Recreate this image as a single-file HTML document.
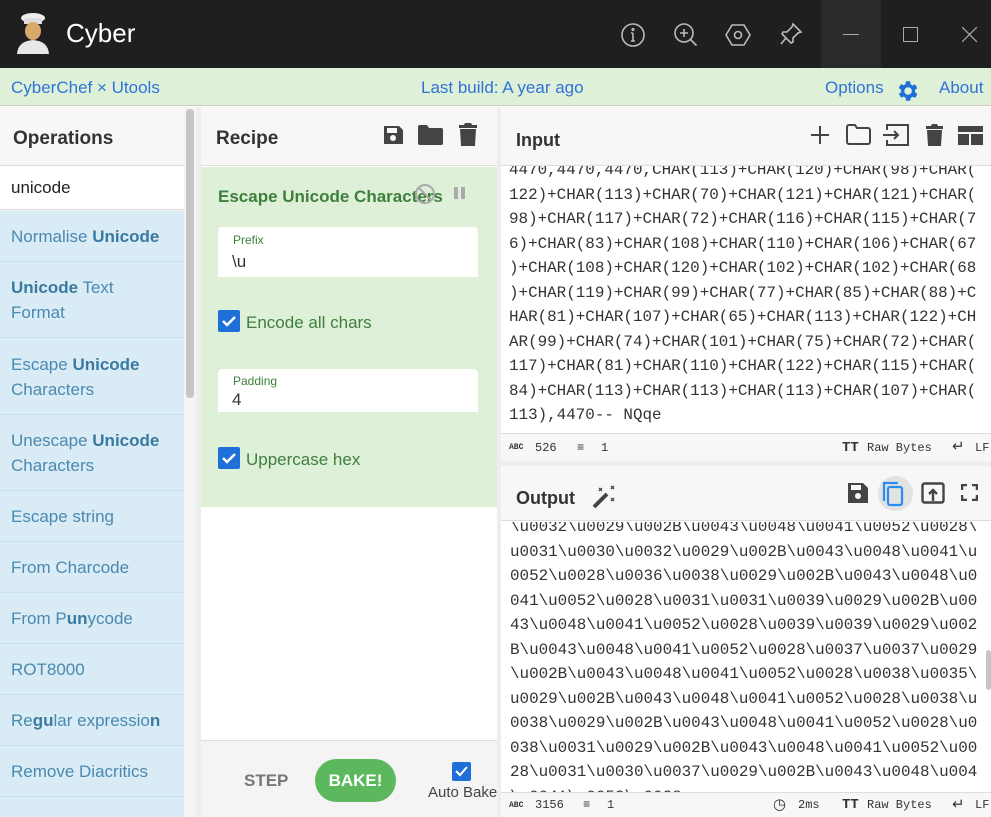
<!DOCTYPE html>
<html><head><meta charset="utf-8"><style>
*{box-sizing:border-box;margin:0;padding:0}
html,body{width:991px;height:817px;overflow:hidden}
body{font-family:"Liberation Sans",sans-serif;background:#fff;position:relative}
.a{position:absolute}
.mono{font-family:"Liberation Mono",monospace;font-size:15.9px;color:#333;white-space:pre;line-height:24.5px}
.op{position:absolute;left:0;width:184px;background:#d9ebf5;border-bottom:1px solid #c4e0ef;color:#4a89b0;font-size:17px;line-height:25px;padding-left:11px}
.op b{color:#3a7aa0}
.ic{position:absolute;fill:#444}
</style></head><body>
<div class="a" style="left:0;top:0;width:991px;height:68px;background:#1f1f1f"></div>
<div class="a" style="left:821px;top:0;width:60px;height:68px;background:#2b2b2b"></div>
<svg class="a" style="left:14px;top:12px" width="38" height="42" viewBox="0 0 38 42"><ellipse cx="19" cy="6" rx="12" ry="5" fill="#eee"/><rect x="10" y="6" width="18" height="6" fill="#ddd"/><ellipse cx="19" cy="19" rx="8" ry="9" fill="#d9a86c"/><path d="M3 42 Q4 29 19 28 Q34 29 35 42Z" fill="#e8e8e8"/></svg>
<div class="a" style="left:66px;top:18px;color:#fff;font-size:26px">Cyber</div>
<svg class="a" style="left:620px;top:22px" width="26" height="26" viewBox="0 0 26 26" fill="none" stroke="#bbb" stroke-width="1.6"><circle cx="13" cy="13" r="11"/><path d="M13 11v8M11 19h4M11 11h2"/><circle cx="13" cy="7.5" r=".8" fill="#bbb"/></svg>
<svg class="a" style="left:673px;top:22px" width="26" height="26" viewBox="0 0 26 26" fill="none" stroke="#bbb" stroke-width="1.6"><circle cx="11" cy="11" r="9"/><path d="M17.5 17.5l6 6M11 7v8M7 11h8"/></svg>
<svg class="a" style="left:725px;top:22px" width="26" height="26" viewBox="0 0 26 26" fill="none" stroke="#bbb" stroke-width="1.6"><path d="M7 3h12l6 10-6 10H7L1 13z"/><circle cx="13" cy="13" r="3.5"/></svg>
<svg class="a" style="left:779px;top:22px" width="24" height="24" viewBox="0 0 24 24" fill="none" stroke="#bbb" stroke-width="1.6"><path d="M14 2l8 8-3 1-5 5 0 4-2 1-9-9 1-2h4l5-5z M7 16l-5 6"/></svg>
<div class="a" style="left:843px;top:34px;width:16px;height:1px;background:#aaa"></div>
<div class="a" style="left:903px;top:27px;width:15px;height:15px;border:1px solid #aaa"></div>
<svg class="a" style="left:962px;top:27px" width="15" height="15"><path d="M0 0L15 15M15 0L0 15" stroke="#aaa" stroke-width="1.2"/></svg>
<div class="a" style="left:0;top:68px;width:991px;height:38px;background:#dff0d8;border-bottom:1px solid #ccc"></div>
<div class="a" style="left:11px;top:78px;color:#2f73d8;font-size:17px">CyberChef × Utools</div>
<div class="a" style="left:421px;top:78px;color:#2f73d8;font-size:17px">Last build: A year ago</div>
<div class="a" style="left:825px;top:78px;color:#2f73d8;font-size:17px">Options</div>
<svg class="a" style="left:894px;top:78px" width="26" height="26" viewBox="0 0 24 24"><path fill="#1f6fd8" d="M19.4 13a7.5 7.5 0 000-2l2.1-1.6-2-3.5-2.5 1a7.7 7.7 0 00-1.7-1L15 3h-4l-.4 2.7a7.7 7.7 0 00-1.700 1l-2.5-1-2 3.5L6.6 11a7.5 7.5 0 000 2l-2.1 1.6 2 3.5 2.5-1a7.7 7.7 0 001.7 1L11 21h4l.4-2.7a7.7 7.7 0 001.7-1l2.5 1 2-3.5zM13 15.5a3.5 3.5 0 110-7 3.5 3.5 0 010 7z"/></svg>
<div class="a" style="left:939px;top:78px;color:#2f73d8;font-size:17px">About</div>
<div class="a" style="left:0;top:107px;width:196px;height:710px;background:#f4f4f4"></div>
<div class="a" style="left:0;top:107px;width:184px;height:59px;background:#f7f7f7;border-bottom:1px solid #ddd"></div>
<div class="a" style="left:13px;top:128px;font-size:19px;font-weight:bold;color:#333">Operations</div>
<div class="a" style="left:0;top:166px;width:184px;height:44px;background:#fff;border-bottom:1px solid #ddd"></div>
<div class="a" style="left:11px;top:178px;font-size:17px;color:#222">unicode</div>
<div class="a" style="left:186px;top:109px;width:8px;height:289px;background:#c6c6c6;border-radius:4px"></div>
<div class="op" style="top:211px;height:51px;padding-top:13px">Normalise <b>Unicode</b></div>
<div class="op" style="top:262px;height:76px;padding-top:13px"><b>Unicode</b> Text<br>Format</div>
<div class="op" style="top:338px;height:77px;padding-top:14px">Escape <b>Unicode</b><br>Characters</div>
<div class="op" style="top:415px;height:76px;padding-top:13px">Unescape <b>Unicode</b><br>Characters</div>
<div class="op" style="top:491px;height:51px;padding-top:13px">Escape string</div>
<div class="op" style="top:542px;height:51px;padding-top:13px">From Charcode</div>
<div class="op" style="top:593px;height:51px;padding-top:13px">From P<b>un</b>ycode</div>
<div class="op" style="top:644px;height:51px;padding-top:13px">ROT8000</div>
<div class="op" style="top:695px;height:51px;padding-top:13px">Re<b>gu</b>lar expressio<b>n</b></div>
<div class="op" style="top:746px;height:51px;padding-top:13px">Remove Diacritics</div>
<div class="op" style="top:797px;height:20px;border-bottom:none"></div>
<div class="a" style="left:196px;top:107px;width:5px;height:710px;background:#eee"></div>
<div class="a" style="left:201px;top:107px;width:296px;height:59px;background:#f7f7f7;border-bottom:1px solid #ddd"></div>
<div class="a" style="left:216px;top:128px;font-size:19px;font-weight:bold;color:#333">Recipe</div>
<svg class="ic" style="left:382px;top:124px" width="22" height="22" viewBox="0 0 22 22"><path d="M2 2h15l4 4v14H2z" fill="#444"/><rect x="5" y="4" width="10" height="5" fill="#f7f7f7"/><circle cx="11" cy="14" r="3" fill="#f7f7f7"/></svg>
<svg class="ic" style="left:418px;top:125px" width="25" height="20" viewBox="0 0 25 20"><path d="M0 2a2 2 0 012-2h7l2 3h12a2 2 0 012 2v13a2 2 0 01-2 2H2a2 2 0 01-2-2z"/></svg>
<svg class="ic" style="left:459px;top:123px" width="18" height="23" viewBox="0 0 18 23"><path d="M0 2h5l1-2h6l1 2h5v3H0zM1 6h16l-1 17H2z"/></svg>
<div class="a" style="left:201px;top:167px;width:296px;height:340px;background:#dff0d8"></div>
<div class="a" style="left:218px;top:187px;font-size:17px;font-weight:bold;color:#3d7f3d">Escape Unicode Characters</div>
<svg class="a" style="left:414px;top:183px" width="22" height="22"><circle cx="11" cy="11" r="9" fill="none" stroke="#aaa" stroke-width="2"/><path d="M5 5l12 12" stroke="#aaa" stroke-width="2"/></svg>
<div class="a" style="left:454px;top:187px;width:4px;height:12px;background:#aaa"></div>
<div class="a" style="left:461px;top:187px;width:4px;height:12px;background:#aaa"></div>
<div class="a" style="left:218px;top:227px;width:260px;height:50px;background:#fff;border-radius:4px 4px 0 0"></div>
<div class="a" style="left:233px;top:233px;font-size:12px;color:#3d7f3d">Prefix</div>
<div class="a" style="left:232px;top:252px;font-size:17px;color:#333">\u</div>
<div class="a" style="left:218px;top:310px;width:22px;height:22px;background:#1f6fd8;border-radius:2px"></div>
<svg class="a" style="left:218px;top:310px" width="22" height="22"><path d="M5 11l4 4 8-8" stroke="#fff" stroke-width="2.5" fill="none"/></svg>
<div class="a" style="left:246px;top:313px;font-size:17px;color:#3d7f3d">Encode all chars</div>
<div class="a" style="left:218px;top:369px;width:260px;height:43px;background:#fff;border-radius:4px 4px 0 0"></div>
<div class="a" style="left:233px;top:374px;font-size:12px;color:#3d7f3d">Padding</div>
<div class="a" style="left:232px;top:390px;font-size:17px;color:#333">4</div>
<div class="a" style="left:218px;top:447px;width:22px;height:22px;background:#1f6fd8;border-radius:2px"></div>
<svg class="a" style="left:218px;top:447px" width="22" height="22"><path d="M5 11l4 4 8-8" stroke="#fff" stroke-width="2.5" fill="none"/></svg>
<div class="a" style="left:246px;top:450px;font-size:17px;color:#3d7f3d">Uppercase hex</div>
<div class="a" style="left:201px;top:740px;width:296px;height:77px;background:#f4f4f4;border-top:1px solid #ddd"></div>
<div class="a" style="left:244px;top:771px;font-size:17px;font-weight:bold;color:#777">STEP</div>
<div class="a" style="left:315px;top:759px;width:81px;height:43px;background:#5cb85c;border-radius:22px;color:#fff;font-weight:bold;font-size:17px;text-align:center;line-height:43px">BAKE!</div>
<div class="a" style="left:452px;top:762px;width:19px;height:19px;background:#1f6fd8;border-radius:2px"></div>
<svg class="a" style="left:452px;top:762px" width="19" height="19"><path d="M4 9l4 4 7-8" stroke="#fff" stroke-width="2" fill="none"/></svg>
<div class="a" style="left:428px;top:784px;font-size:15px;color:#444">Auto Bake</div>
<div class="a" style="left:497px;top:107px;width:4px;height:710px;background:#eee"></div>
<div class="a" style="left:501px;top:107px;width:490px;height:59px;background:#f7f7f7;border-bottom:1px solid #ddd"></div>
<div class="a" style="left:516px;top:130px;font-size:18px;font-weight:bold;color:#333">Input</div>
<svg class="a" style="left:810px;top:125px" width="20" height="20"><path d="M10 1v18M1 10h18" stroke="#444" stroke-width="2"/></svg>
<svg class="a" style="left:846px;top:124px" width="25" height="21" viewBox="0 0 25 21"><path d="M1 3a2 2 0 012-2h6l2 3h11a2 2 0 012 2v12a2 2 0 01-2 2H3a2 2 0 01-2-2z" fill="none" stroke="#444" stroke-width="2"/></svg>
<svg class="a" style="left:882px;top:124px" width="27" height="22" viewBox="0 0 27 22" fill="none" stroke="#444" stroke-width="2"><path d="M5 6V1h21v20H5v-5"/><path d="M1 11h15M12 7l4 4-4 4"/></svg>
<svg class="ic" style="left:926px;top:124px" width="17" height="22" viewBox="0 0 17 22"><path d="M0 2h5l1-2h5l1 2h5v3H0zM1 6h15l-1 16H2z"/></svg>
<svg class="ic" style="left:958px;top:126px" width="25" height="19" viewBox="0 0 25 19"><path d="M0 0h25v6H0zM0 8h11v11H0zM13 8h12v11H13z"/></svg>
<div class="a" style="left:501px;top:166px;width:490px;height:267px;overflow:hidden"><div class="mono a" style="left:8px;top:-8px">4470,4470,4470,CHAR(113)+CHAR(120)+CHAR(98)+CHAR(
122)+CHAR(113)+CHAR(70)+CHAR(121)+CHAR(121)+CHAR(
98)+CHAR(117)+CHAR(72)+CHAR(116)+CHAR(115)+CHAR(7
6)+CHAR(83)+CHAR(108)+CHAR(110)+CHAR(106)+CHAR(67
)+CHAR(108)+CHAR(120)+CHAR(102)+CHAR(102)+CHAR(68
)+CHAR(119)+CHAR(99)+CHAR(77)+CHAR(85)+CHAR(88)+C
HAR(81)+CHAR(107)+CHAR(65)+CHAR(113)+CHAR(122)+CH
AR(99)+CHAR(74)+CHAR(101)+CHAR(75)+CHAR(72)+CHAR(
117)+CHAR(81)+CHAR(110)+CHAR(122)+CHAR(115)+CHAR(
84)+CHAR(113)+CHAR(113)+CHAR(113)+CHAR(107)+CHAR(
113),4470-- NQqe</div></div>
<div class="a" style="left:501px;top:433px;width:490px;height:28px;background:#f7f7f7;border-top:1px solid #ddd;font-family:'Liberation Mono',monospace;font-size:12px;color:#333;line-height:28px">
<span class="a" style="left:8px;font-size:8px;font-weight:bold">ABC</span><span class="a" style="left:34px">526</span>
<span class="a" style="left:76px;font-weight:bold">≡</span><span class="a" style="left:100px">1</span>
<span class="a" style="left:341px;font-weight:bold;font-size:14px">TT</span><span class="a" style="left:366px">Raw Bytes</span>
<span class="a" style="left:451px;font-size:15px">↵</span><span class="a" style="left:474px">LF</span></div>
<div class="a" style="left:501px;top:461px;width:490px;height:5px;background:#eee"></div>
<div class="a" style="left:501px;top:466px;width:490px;height:55px;background:#f7f7f7;border-bottom:1px solid #ddd"></div>
<div class="a" style="left:516px;top:488px;font-size:18px;font-weight:bold;color:#333">Output</div>
<svg class="a" style="left:591px;top:485px" width="26" height="24" viewBox="0 0 26 24"><path d="M3 22L16 9" stroke="#444" stroke-width="4"/><path d="M8 3l3 3M11 3l-3 3M20 1l3 3M23 1l-3 3M20 13l3 3M23 13l-3 3" stroke="#444" stroke-width="1.3"/></svg>
<svg class="a" style="left:847px;top:482px" width="22" height="22" viewBox="0 0 22 22"><path d="M1 1h15l5 5v15H1z" fill="#444"/><rect x="4" y="3" width="10" height="5" fill="#f7f7f7"/><circle cx="11" cy="14" r="3" fill="#f7f7f7"/></svg>
<div class="a" style="left:878px;top:476px;width:35px;height:35px;border-radius:50%;background:#e2e2e2"></div>
<svg class="a" style="left:881px;top:480px" width="28" height="28" viewBox="0 0 28 28" fill="none" stroke="#2a8ef0" stroke-width="2.2"><path d="M3 21V3h14"/><rect x="7" y="7" width="14" height="18" rx="2"/></svg>
<svg class="a" style="left:921px;top:482px" width="24" height="22" viewBox="0 0 24 22" fill="none" stroke="#444" stroke-width="2.4"><rect x="1.5" y="1.5" width="21" height="19" rx="2"/><path d="M12 19V9M8 12l4-4 4 4"/></svg>
<svg class="a" style="left:961px;top:484px" width="17" height="17" fill="none" stroke="#444" stroke-width="2.5"><path d="M1 6V1h5M11 1h5v5M16 11v5h-5M6 16H1v-5"/></svg>
<div class="a" style="left:501px;top:522px;width:490px;height:270px;overflow:hidden"><div class="mono a" style="left:9px;top:-7px">\u0032\u0029\u002B\u0043\u0048\u0041\u0052\u0028\
u0031\u0030\u0032\u0029\u002B\u0043\u0048\u0041\u
0052\u0028\u0036\u0038\u0029\u002B\u0043\u0048\u0
041\u0052\u0028\u0031\u0031\u0039\u0029\u002B\u00
43\u0048\u0041\u0052\u0028\u0039\u0039\u0029\u002
B\u0043\u0048\u0041\u0052\u0028\u0037\u0037\u0029
\u002B\u0043\u0048\u0041\u0052\u0028\u0038\u0035\
u0029\u002B\u0043\u0048\u0041\u0052\u0028\u0038\u
0038\u0029\u002B\u0043\u0048\u0041\u0052\u0028\u0
038\u0031\u0029\u002B\u0043\u0048\u0041\u0052\u00
28\u0031\u0030\u0037\u0029\u002B\u0043\u0048\u004
\u0041\u0052\u0028</div></div>
<div class="a" style="left:986px;top:650px;width:5px;height:40px;background:#c6c6c6;border-radius:3px"></div>
<div class="a" style="left:501px;top:792px;width:490px;height:25px;background:#f7f7f7;border-top:1px solid #ddd;font-family:'Liberation Mono',monospace;font-size:12px;color:#333;line-height:25px">
<span class="a" style="left:8px;font-size:8px;font-weight:bold">ABC</span><span class="a" style="left:34px">3156</span>
<span class="a" style="left:82px;font-weight:bold">≡</span><span class="a" style="left:106px">1</span>
<span class="a" style="left:272px;font-size:15px">◷</span><span class="a" style="left:297px">2ms</span>
<span class="a" style="left:341px;font-weight:bold;font-size:14px">TT</span><span class="a" style="left:366px">Raw Bytes</span>
<span class="a" style="left:451px;font-size:15px">↵</span><span class="a" style="left:474px">LF</span></div>
</body></html>
